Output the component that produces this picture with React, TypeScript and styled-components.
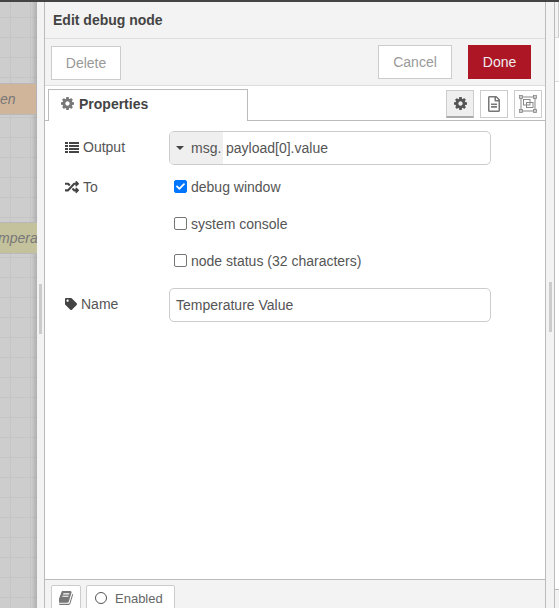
import styled, { createGlobalStyle } from "styled-components"
import { FaRandom, FaTag, FaRegFileAlt, FaCheck } from "react-icons/fa"

const GlobalStyle = createGlobalStyle`
	html, body {
		margin: 0;
		padding: 0;
		background: #cdcdcd;
		font-family: "Liberation Sans", Arial, sans-serif;
		font-size: 14px;
		color: #555;
	}
`

const CogIcon = ({ size, color }: { size: number; color: string }) => (
	<svg width={size} height={size} viewBox="128 128 1536 1536" fill={color}>
		<path d="M1152 896q0-106-75-181t-181-75-181 75-75 181 75 181 181 75 181-75 75-181zm512-109v222q0 12-8 23t-20 13l-185 28q-19 54-39 91 35 50 107 138 10 12 10 25t-9 23q-27 37-99 108t-94 71q-12 0-26-9l-138-108q-44 23-91 38-16 136-29 186-7 28-36 28h-222q-14 0-24.500-8.500t-11.500-21.500l-28-184q-49-16-90-37l-141 107q-10 9-25 9-14 0-25-11-126-114-165-168-7-10-7-23 0-12 8-23 15-21 51-66.500t54-70.500q-27-50-41-99l-183-27q-13-2-21-12.500t-8-23.500v-222q0-12 8-23t19-13l186-28q14-46 39-92-40-57-107-138-10-12-10-24 0-10 9-23 26-36 98.500-107.500t94.500-71.500q13 0 26 10l138 107q44-23 91-38 16-136 29-186 7-28 36-28h222q14 0 24.500 8.500t11.500 21.500l28 184q49 16 90 37l142-107q9-9 24-9 13 0 25 10 129 119 165 170 7 8 7 22 0 12-8 23-15 21-51 66.500t-54 70.500q26 50 41 98l183 28q13 2 21 12.500t8 23.500z" />
	</svg>
)

const BookIcon = () => (
	<svg width="14" height="14" viewBox="128 128 1536 1536" fill="#777">
		<path d="M1639 478q40 57 18 129l-275 906q-19 64-76.500 107.500t-122.500 43.500h-923q-77 0-148.500-53.500t-99.500-131.500q-24-67-2-127 0-4 3-27t4-37q1-8-3-21.500t-3-19.500q2-11 8-21t16.500-23.500 16.500-23.500q23-38 45-91.500t30-91.500q3-10 .5-30t-.5-28q3-11 17-28t17-23q21-36 42-92t25-90q1-9-2.500-32t.5-28q4-13 22-30.500t22-22.500q19-26 42.500-84.500t27.500-96.500q1-8-3-25.500t-2-26.500q2-8 9-18t18-23 17-21q8-12 16.500-30.500t15-35 16-36 19.500-32 26.500-23.500 36-11.500 47.500 5.500l-1 3q38-9 51-9h761q74 0 114 56t18 130l-274 906q-36 119-71.500 153.500t-128.500 34.500h-869q-27 0-38 15-11 16-1 43 24 70 144 70h923q29 0 56-15.500t35-41.500l300-987q7-22 5-57 38 15 59 43zm-1064 2q-4 13 2 22.500t20 9.500h608q13 0 25.500-9.500t16.500-22.500l21-64q4-13-2-22.500t-20-9.500h-608q-13 0-25.500 9.500t-16.500 22.500zm-83 256q-4 13 2 22.500t20 9.500h608q13 0 25.500-9.500t16.500-22.500l21-64q4-13-2-22.500t-20-9.500h-608q-13 0-25.500 9.500t-16.500 22.500z" />
	</svg>
)

const ListIcon = () => (
	<svg width="14" height="12" viewBox="0 0 14 12" fill="#444">
		<rect x="0" y="1" width="3" height="2" />
		<rect x="4" y="1" width="10" height="2" />
		<rect x="0" y="4" width="3" height="2" />
		<rect x="4" y="4" width="10" height="2" />
		<rect x="0" y="7" width="3" height="2" />
		<rect x="4" y="7" width="10" height="2" />
		<rect x="0" y="10" width="3" height="2" />
		<rect x="4" y="10" width="10" height="2" />
	</svg>
)

const CaretIcon = () => (
	<svg width="8" height="4" viewBox="0 0 8 4" fill="#444">
		<polygon points="0,0 8,0 4,4" />
	</svg>
)

const LayoutIcon = () => (
	<svg width="18" height="18" viewBox="0 0 18 18" fill="none" stroke="#888" strokeWidth="1">
		<rect x="2" y="2" width="14" height="14" />
		<rect x="4.5" y="4.5" width="6.5" height="5.5" />
		<rect x="7.5" y="7.5" width="6.5" height="5" />
		<rect x="0.5" y="0.5" width="3" height="3" fill="#ccc" strokeWidth="0.8" />
		<rect x="14.5" y="0.5" width="3" height="3" fill="#ccc" strokeWidth="0.8" />
		<rect x="0.5" y="14.5" width="3" height="3" fill="#ccc" strokeWidth="0.8" />
		<rect x="14.5" y="14.5" width="3" height="3" fill="#ccc" strokeWidth="0.8" />
	</svg>
)

const App = () => {
	return (
		<>
			<GlobalStyle />
			<Page>
				<TopBar />
				<Workspace>
					<Canvas>
						<CanvasNode $top={81} $left={0} $width={36} $bg="#d1b59b">en</CanvasNode>
						<CanvasNode $top={220} $left={-2} $width={39} $bg="#c4c29c">mpera</CanvasNode>
					</Canvas>
					<Gutter>
						<Handle />
					</Gutter>
					<Panel>
						<Title>Edit debug node</Title>
						<Actions>
							<DeleteButton>Delete</DeleteButton>
							<RightActions>
								<CancelButton>Cancel</CancelButton>
								<DoneButton>Done</DoneButton>
							</RightActions>
						</Actions>
						<TabBar>
							<Tab>
								<CogIcon size={13} color="#777" />
								Properties
							</Tab>
							<TabTools>
								<ToolButton $active><CogIcon size={13} color="#555" /></ToolButton>
								<ToolButton><FaRegFileAlt size={16} color="#777" /></ToolButton>
								<ToolButton><LayoutIcon /></ToolButton>
							</TabTools>
						</TabBar>
						<Form>
							<FormRow>
								<Label><ListIcon />Output</Label>
								<TypedInput>
									<TypeSelect><CaretIcon />msg.</TypeSelect>
									<TypedValue>payload[0].value</TypedValue>
								</TypedInput>
							</FormRow>
							<CheckRow>
								<ToLabel><FaRandom size={14} color="#444" />To</ToLabel>
								<CheckList>
									<CheckItem>
										<CheckBox $checked><FaCheck size={9} color="#fff" /></CheckBox>
										debug window
									</CheckItem>
									<CheckItem><CheckBox />system console</CheckItem>
									<CheckItem><CheckBox />node status (32 characters)</CheckItem>
								</CheckList>
							</CheckRow>
							<FormRow>
								<Label><FaTag size={12} color="#444" />Name</Label>
								<TextBox>Temperature Value</TextBox>
							</FormRow>
						</Form>
						<Footer>
							<BookButton><BookIcon /></BookButton>
							<EnabledButton>
								<StatusRing />
								Enabled
							</EnabledButton>
						</Footer>
					</Panel>
					<RightGutter>
						<RightHandle />
					</RightGutter>
					<RightEdge>
						<EdgeHeader />
						<EdgeToolbar />
						<EdgeBody />
						<EdgeFooter />
					</RightEdge>
				</Workspace>
			</Page>
		</>
	)
}

export default App

const Page = styled.div`
	width: 559px;
	height: 608px;
	overflow: hidden;
	display: flex;
	flex-direction: column;
`

const TopBar = styled.div`
	height: 2px;
	background: #444;
	flex: none;
`

const Workspace = styled.div`
	flex: 1;
	display: flex;
	min-height: 0;
`

const Canvas = styled.div`
	position: relative;
	width: 37px;
	flex: none;
	overflow: hidden;
	background-color: #cdcdcd;
	background-image:
		linear-gradient(to left, rgba(0, 0, 0, 0.14), transparent 6px),
		linear-gradient(to right, #c5c5c5 1px, transparent 1px),
		linear-gradient(to bottom, #c5c5c5 1px, transparent 1px);
	background-size: 100% 100%, 20px 20px, 20px 20px;
	background-position: 0 0, 10px 15px, 10px 15px;
`

const CanvasNode = styled.div<{ $top: number; $left: number; $width: number; $bg: string }>`
	position: absolute;
	top: ${(p) => p.$top}px;
	left: ${(p) => p.$left}px;
	width: ${(p) => p.$width}px;
	height: 32px;
	line-height: 30px;
	background: ${(p) => p.$bg};
	border-top: 1px solid #b8b8b8;
	border-bottom: 1px solid #b8b8b8;
	box-sizing: border-box;
	font-style: italic;
	color: #777;
	white-space: nowrap;
	overflow: hidden;
`

const Gutter = styled.div`
	width: 7px;
	flex: none;
	background: #f3f3f3;
	border-right: 1px solid #bbb;
	display: flex;
	align-items: flex-start;
	justify-content: center;
`

const Handle = styled.div`
	width: 3px;
	height: 50px;
	margin-top: 282px;
	background: #ccc;
`

const Panel = styled.div`
	width: 500px;
	flex: none;
	background: #fff;
	display: flex;
	flex-direction: column;
`

const Title = styled.div`
	height: 37px;
	box-sizing: border-box;
	line-height: 36px;
	padding-left: 8px;
	background: #f3f3f3;
	border-bottom: 1px solid #ddd;
	font-weight: bold;
	color: #444;
`

const Actions = styled.div`
	height: 47px;
	box-sizing: border-box;
	padding: 6px 14px 0 6px;
	background: #f3f3f3;
	border-bottom: 1px solid #ddd;
	display: flex;
	justify-content: space-between;
	align-items: flex-start;
`

const RightActions = styled.div`
	display: flex;
	gap: 16px;
`

const Button = styled.div`
	height: 34px;
	box-sizing: border-box;
	line-height: 32px;
	text-align: center;
	background: #fff;
	border: 1px solid #ccc;
	color: #999;
`

const DeleteButton = styled(Button)`
	width: 70px;
	margin-top: 1px;
`

const CancelButton = styled(Button)`
	width: 74px;
`

const DoneButton = styled(Button)`
	width: 63px;
	background: #ad1625;
	border-color: #ad1625;
	color: #eee;
`

const TabBar = styled.div`
	height: 35px;
	box-sizing: border-box;
	padding: 3px 3px 0 3px;
	display: flex;
	justify-content: space-between;
	border-bottom: 1px solid #bbb;
`

const Tab = styled.div`
	width: 200px;
	height: 32px;
	box-sizing: border-box;
	padding: 0 12px 4px;
	display: flex;
	align-items: center;
	gap: 5px;
	background: #fff;
	border: 1px solid #bbb;
	border-bottom: none;
	font-weight: bold;
	color: #444;
`

const TabTools = styled.div`
	display: flex;
	gap: 6px;
	margin-top: 1px;
`

const ToolButton = styled.div<{ $active?: boolean }>`
	width: 28px;
	height: 28px;
	box-sizing: border-box;
	display: flex;
	align-items: center;
	justify-content: center;
	border: 1px solid #ccc;
	background: ${(p) => (p.$active ? "#efefef" : "#fff")};
	border-bottom: ${(p) => (p.$active ? "2px solid #aaa" : "1px solid #ccc")};
`

const Form = styled.div`
	flex: 1;
	padding: 10px 54px 0 20px;
	display: flex;
	flex-direction: column;
`

const FormRow = styled.div`
	display: flex;
	align-items: center;
	height: 34px;
`

const Label = styled.div`
	width: 104px;
	flex: none;
	display: flex;
	align-items: center;
	gap: 4px;
	color: #555;
	margin-top: -2px;
`

const TypedInput = styled.div`
	flex: 1;
	height: 34px;
	box-sizing: border-box;
	display: flex;
	border: 1px solid #ccc;
	border-radius: 5px;
	overflow: hidden;
`

const TypeSelect = styled.div`
	width: 53px;
	box-sizing: border-box;
	background: #efefef;
	display: flex;
	align-items: center;
	gap: 7px;
	padding-left: 6px;
	color: #555;
`

const TypedValue = styled.div`
	padding-left: 3px;
	line-height: 32px;
	color: #555;
`

const CheckRow = styled.div`
	display: flex;
	margin-top: 3px;
	margin-bottom: 9px;
`

const ToLabel = styled(Label)`
	height: 37px;
	margin-top: 0;
`

const CheckList = styled.div`
	display: flex;
	flex-direction: column;
	margin-left: 5px;
`

const CheckItem = styled.div`
	height: 37px;
	display: flex;
	align-items: center;
	gap: 4px;
	color: #555;
`

const CheckBox = styled.div<{ $checked?: boolean }>`
	width: 13px;
	height: 13px;
	box-sizing: border-box;
	display: flex;
	align-items: center;
	justify-content: center;
	border-radius: 2px;
	border: 1px solid ${(p) => (p.$checked ? "#0075ff" : "#767676")};
	background: ${(p) => (p.$checked ? "#0075ff" : "#fff")};
`

const TextBox = styled.div`
	flex: 1;
	height: 34px;
	box-sizing: border-box;
	line-height: 32px;
	padding-left: 6px;
	border: 1px solid #ccc;
	border-radius: 5px;
	color: #555;
`

const Footer = styled.div`
	height: 29px;
	box-sizing: border-box;
	padding: 5px 0 0 6px;
	display: flex;
	gap: 5px;
	background: #f3f3f3;
	border-top: 1px solid #bbb;
`

const FooterButton = styled.div`
	height: 30px;
	box-sizing: border-box;
	display: flex;
	align-items: center;
	background: #fff;
	border: 1px solid #ccc;
	border-radius: 2px 2px 0 0;
	padding-bottom: 4px;
`

const BookButton = styled(FooterButton)`
	width: 30px;
	justify-content: center;
`

const EnabledButton = styled(FooterButton)`
	width: 89px;
	padding-left: 8px;
	gap: 8px;
	font-size: 13px;
	color: #666;
`

const StatusRing = styled.span`
	width: 12px;
	height: 12px;
	box-sizing: border-box;
	border: 1px solid #555;
	border-radius: 50%;
`

const RightGutter = styled.div`
	width: 8px;
	flex: none;
	background: #f3f3f3;
	border-left: 1px solid #bbb;
	border-right: 1px solid #bbb;
	display: flex;
	justify-content: center;
`

const RightHandle = styled.div`
	width: 3px;
	height: 50px;
	margin-top: 280px;
	background: #ccc;
`

const RightEdge = styled.div`
	flex: 1;
	display: flex;
	flex-direction: column;
	background: #fff;
`

const EdgeHeader = styled.div`
	height: 35px;
	background: #f3f3f3;
	border-bottom: 1px solid #ddd;
	border-right: 1px solid #ccc;
`

const EdgeToolbar = styled.div`
	height: 43px;
	background: #fafafa;
	border-bottom: 1px solid #ddd;
`

const EdgeBody = styled.div`
	flex: 1;
`

const EdgeFooter = styled.div`
	height: 18px;
	background: #f3f3f3;
	border-top: 1px solid #bbb;
`
